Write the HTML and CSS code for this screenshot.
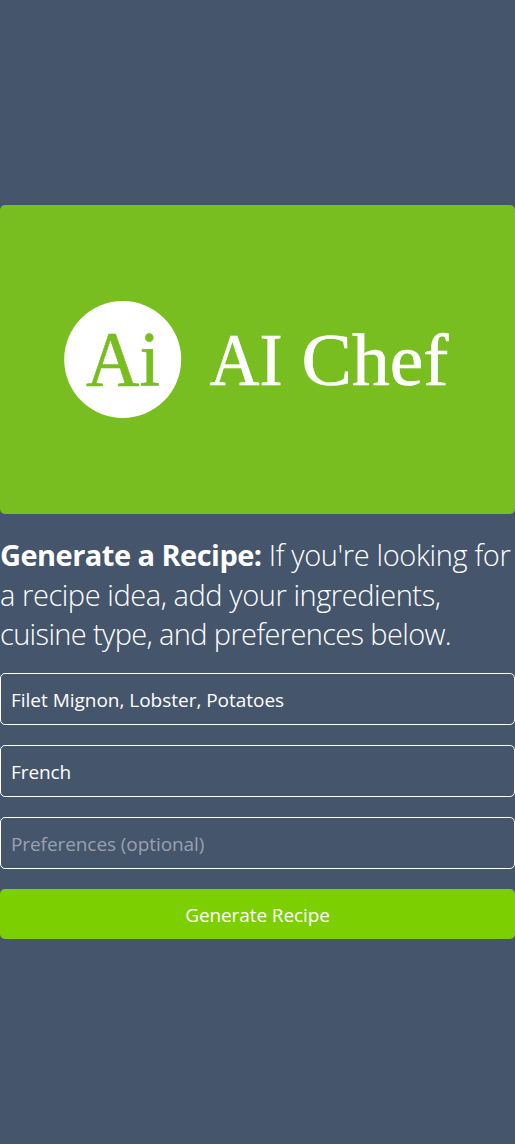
FILE: index.html
```html
<!DOCTYPE html>
<html lang="en">
<head>
<meta charset="utf-8">
<title>AI Chef</title>
<link rel="stylesheet" href="styles.css">
</head>
<body>
<main class="page">
  <svg class="banner" viewBox="0 0 515 309" role="img" aria-label="AI Chef">
    <circle class="disc" cx="122.700" cy="154.500" r="58.500"/>
    <text class="mark" font-size="78" x="86" y="180" textLength="74" lengthAdjust="spacingAndGlyphs">Ai</text>
    <g class="name" font-size="74">
      <text x="209.500" y="180" textLength="73" lengthAdjust="spacingAndGlyphs">AI</text>
      <text x="301.500" y="180" textLength="147" lengthAdjust="spacingAndGlyphs">Chef</text>
    </g>
  </svg>
  <p class="intro"><span class="line first"><strong>Generate a Recipe:</strong> If you're looking for</span> <span class="line second">a recipe idea, add your ingredients,</span> <span class="line third">cuisine type, and preferences below.</span></p>
  <form class="form">
    <input class="field ingredients" type="text" aria-label="Ingredients" value="Filet Mignon, Lobster, Potatoes">
    <input class="field" type="text" aria-label="Cuisine" value="French">
    <input class="field" type="text" placeholder="Preferences (optional)">
    <button class="submit" type="button">Generate Recipe</button>
  </form>
</main>
</body>
</html>
```
FILE: styles.css
```css
* { box-sizing: border-box; }
body {
  margin: 0;
  background: #45556c;
  color: #fff;
  font-family: "Open Sans", "Noto Sans", sans-serif;
}
.page {
  min-height: 1144px;
  display: flex;
  flex-direction: column;
  justify-content: center;
}
.banner {
  display: block;
  width: 100%;
  height: 309px;
  background: #78be20;
  border-radius: 5px;
  font-family: "Liberation Serif", serif;
}
.disc { fill: #fff; }
.name { fill: #fff; stroke: #fff; stroke-width: 0.6px; }
.mark { fill: #78be20; stroke: #78be20; stroke-width: 0.6px; }
.intro {
  margin: 21.500px 0 19.500px;
  font-size: 29px;
  font-weight: 300;
  line-height: 39.400px;
}
.line { display: block; white-space: nowrap; }
.first { letter-spacing: -0.36px; }
.second { letter-spacing: -0.43px; }
.third { letter-spacing: -0.64px; }
.intro strong { font-weight: 700; letter-spacing: -0.53px; }
.form { display: flex; flex-direction: column; gap: 20px; }
.field {
  width: 100%;
  height: 52px;
  padding: 1px 10px 0;
  border: 1px solid #fff;
  border-radius: 5px;
  background: transparent;
  color: #fff;
  font: 400 19px "Open Sans", "Noto Sans", sans-serif;
  letter-spacing: -0.08px;
}
.ingredients { letter-spacing: -0.02px; }
.field::placeholder { color: #99a1af; opacity: 1; }
.submit {
  height: 50px;
  padding: 2px 0 0;
  border: 0;
  border-radius: 5px;
  background: #7ccf00;
  color: #fff;
  font: 400 19px "Open Sans", "Noto Sans", sans-serif;
  letter-spacing: -0.1px;
}
```
